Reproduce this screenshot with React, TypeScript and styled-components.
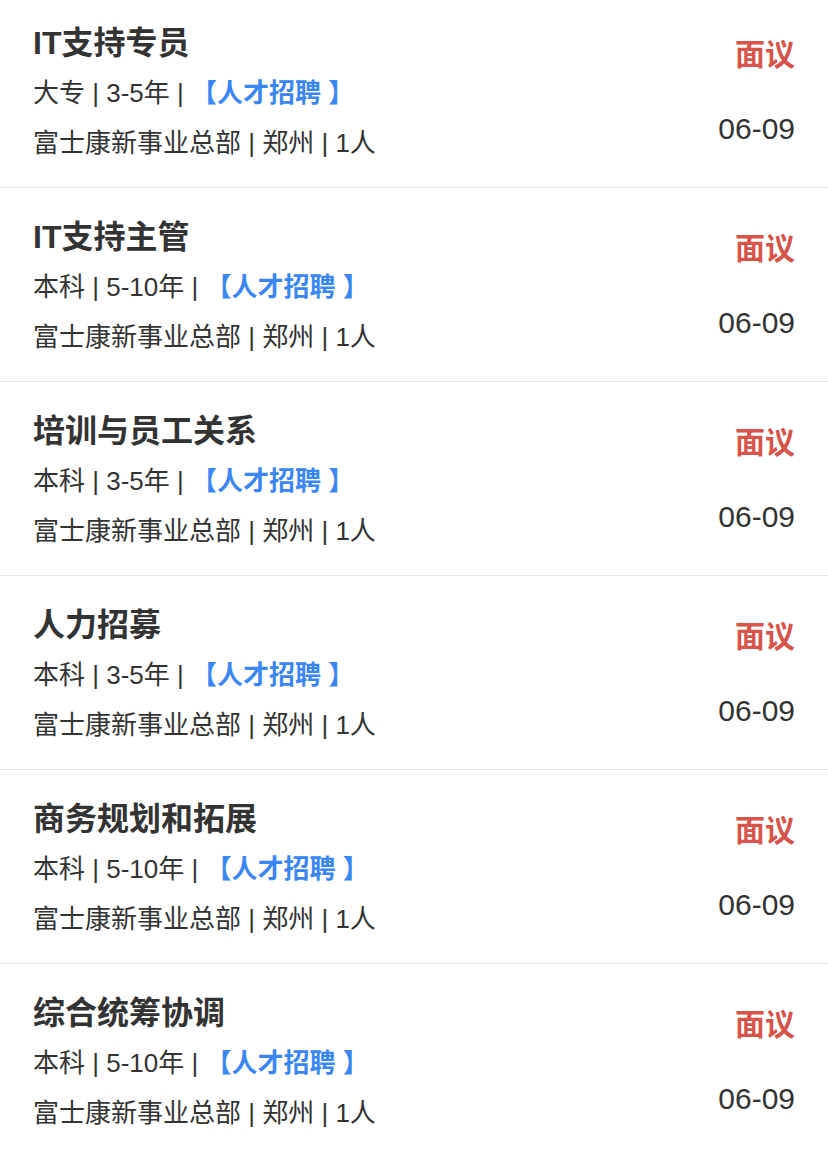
import styled, { createGlobalStyle } from 'styled-components';

const GlobalStyle = createGlobalStyle`
  html, body {
    margin: 0;
    padding: 0;
    background: #ffffff;
  }
  body {
    font-family: 'Liberation Sans', 'Noto Sans CJK SC', sans-serif;
    color: #333333;
    overflow: hidden;
  }
`;

type Job = {
  title: string;
  degree: string;
  years: string;
};

const jobs: Job[] = [
  { title: 'IT支持专员', degree: '大专', years: '3-5年' },
  { title: 'IT支持主管', degree: '本科', years: '5-10年' },
  { title: '培训与员工关系', degree: '本科', years: '3-5年' },
  { title: '人力招募', degree: '本科', years: '3-5年' },
  { title: '商务规划和拓展', degree: '本科', years: '5-10年' },
  { title: '综合统筹协调', degree: '本科', years: '5-10年' },
];

const App = () => {
  return (
    <>
      <GlobalStyle />
      <List>
        {jobs.map((job, i) => (
          <Item key={i}>
            <Info>
              <Title>{job.title}</Title>
              <Meta>
                {job.degree} | {job.years} | <Tag>【人才招聘 】</Tag>
              </Meta>
              <Meta>富士康新事业总部 | 郑州 | 1人</Meta>
            </Info>
            <Side>
              <Salary>面议</Salary>
              <DateText>06-09</DateText>
            </Side>
          </Item>
        ))}
      </List>
    </>
  );
};

const List = styled.div`
  display: flex;
  flex-direction: column;
  margin-top: -6px;
`;

const Item = styled.div`
  display: flex;
  justify-content: space-between;
  align-items: flex-start;
  height: 193px;
  box-sizing: content-box;
  padding: 0 33px;
  border-bottom: 1px solid #e9e9e9;
`;

const Info = styled.div`
  display: flex;
  flex-direction: column;
  padding-top: 27px;
`;

const Title = styled.div`
  font-size: 32px;
  line-height: 44px;
  font-weight: bold;
  color: #333333;
  margin-bottom: 8px;
`;

const Meta = styled.div`
  font-size: 26px;
  line-height: 40px;
  color: #333333;
  margin-bottom: 10px;
  white-space: nowrap;
`;

const Tag = styled.span`
  color: #3a86f4;
  font-weight: bold;
`;

const Side = styled.div`
  display: flex;
  flex-direction: column;
  align-items: flex-end;
  padding-top: 41px;
`;

const Salary = styled.div`
  font-size: 30px;
  line-height: 40px;
  font-weight: bold;
  color: #d6544a;
`;

const DateText = styled.div`
  font-size: 30px;
  line-height: 40px;
  color: #333333;
  margin-top: 34px;
`;

export default App;
